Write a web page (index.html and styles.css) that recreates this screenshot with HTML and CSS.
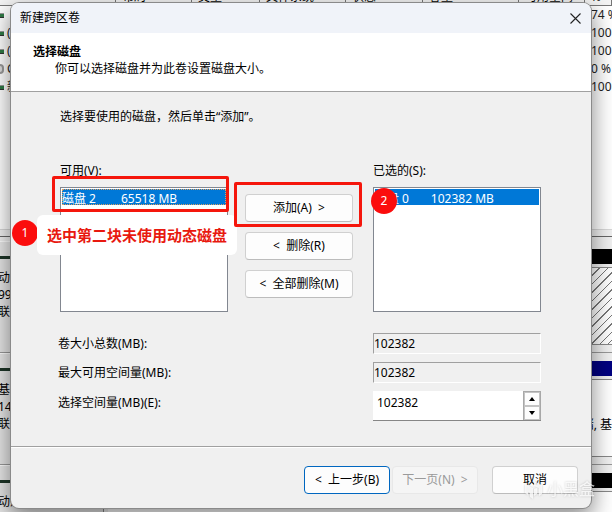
FILE: index.html
```
<!DOCTYPE html>
<html lang="zh-CN">
<head>
    <meta charset="UTF-8">
    <meta name="viewport" content="width=device-width, initial-scale=1.0">
    <title>新建跨区卷</title>
    <link rel="stylesheet" href="styles.css">
</head>
<body>
    <div class="desktop">
        <!-- Disk management window behind the dialog -->
        <div class="manager">
            <div class="columns">
                <span class="col col-name"></span>
                <span class="col col-layout">布局</span>
                <span class="col col-type">类型</span>
                <span class="col col-fs">文件系统</span>
                <span class="col col-status">状态</span>
                <span class="col col-size">容量</span>
                <span class="col col-free">可用空间</span>
                <span class="col col-percent">%</span>
            </div>
            <div class="volumes">
                <div class="volume"><i class="drive"></i><span class="name"></span><span class="percent">74 %</span></div>
                <div class="volume"><i class="drive"></i><span class="name">(</span><span class="percent">100 %</span></div>
                <div class="volume"><i class="drive"></i><span class="name">(</span><span class="percent">100 %</span></div>
                <div class="volume"><i class="drive disc"></i><span class="name">C</span><span class="percent">0 %</span></div>
                <div class="volume"><i class="drive"></i><span class="name">新</span><span class="percent">100 %</span></div>
            </div>
            <div class="disk">
                <div class="disk-label"><p>动态</p><p>99</p><p>联机</p></div>
                <div class="disk-map"><div class="bar"></div><div class="space hatched"></div></div>
            </div>
            <div class="disk">
                <div class="disk-label"><p>基本</p><p>14</p><p>联机</p></div>
                <div class="disk-map"><div class="bar primary"></div><div class="space">储, 基</div></div>
            </div>
            <div class="disk">
                <div class="disk-label"><p>动态</p></div>
                <div class="disk-map"><div class="bar"></div><div class="space"></div></div>
            </div>
        </div>

        <!-- Wizard dialog -->
        <form class="dialog">
            <div class="titlebar">
                <span>新建跨区卷</span>
                <button type="button" class="close" aria-label="关闭">
                    <svg width="11" height="11" viewBox="0 0 11 11"><path d="M.5 .5l10 10M10.5 .5l-10 10" stroke="#222" stroke-width="1.1" fill="none"/></svg>
                </button>
            </div>
            <div class="heading">
                <h1>选择磁盘</h1>
                <p>你可以选择磁盘并为此卷设置磁盘大小。</p>
            </div>

            <div class="content">
                <p class="intro">选择要使用的磁盘，然后单击“添加”。</p>

                <div class="picker">
                    <div class="list">
                        <label for="available">可用(V):</label>
                        <select id="available" class="dotted" size="7">
                            <option selected>磁盘 2&nbsp;&nbsp;&nbsp;&nbsp;&nbsp;&nbsp;&nbsp;&nbsp;65518 MB</option>
                        </select>
                        <div class="mark mark-list"></div>
                        <div class="badge badge-one">1</div>
                        <div class="tip">选中第二块未使用动态磁盘</div>
                    </div>
                    <div class="actions">
                        <button type="button">添加(A) &nbsp;&gt;</button>
                        <button type="button">&lt; &nbsp;删除(R)</button>
                        <button type="button">&lt; &nbsp;全部删除(M)</button>
                        <div class="mark mark-add"></div>
                    </div>
                    <div class="list">
                        <label for="selected">已选的(S):</label>
                        <select id="selected" size="7">
                            <option selected>磁盘 0&nbsp;&nbsp;&nbsp;&nbsp;&nbsp;&nbsp;&nbsp;102382 MB</option>
                        </select>
                        <div class="badge badge-two">2</div>
                    </div>
                </div>

                <div class="fields">
                    <div class="field">
                        <label for="total">卷大小总数(MB):</label>
                        <input type="text" id="total" class="sunken" value="102382" readonly>
                    </div>
                    <div class="field">
                        <label for="max">最大可用空间量(MB):</label>
                        <input type="text" id="max" class="sunken" value="102382" readonly>
                    </div>
                    <div class="field">
                        <label for="amount">选择空间量(MB)(E):</label>
                        <div class="spinner">
                            <input type="text" id="amount" value="102382">
                            <div class="arrows">
                                <button type="button" aria-label="增加"><svg width="6" height="4" viewBox="0 0 6 4"><path d="M3 0l3 4H0z"/></svg></button>
                                <button type="button" aria-label="减少"><svg width="6" height="4" viewBox="0 0 6 4"><path d="M0 0h6L3 4z"/></svg></button>
                            </div>
                        </div>
                    </div>
                </div>
            </div>

            <div class="footer">
                <button type="button" class="default">&lt; &nbsp;上一步(B)</button>
                <button type="button" disabled>下一页(N) &nbsp;&gt;</button>
                <button type="button" class="cancel">取消</button>
            </div>
        </form>

        <!-- Watermark -->
        <div class="watermark">
            <svg width="19" height="19" viewBox="0 0 19 19" fill="currentColor"><path d="M1 4l8 4v11l-3-2v-4l-2-1v3l-3-2zM10 1l8 4v9l-3 2V8l-5-2zM10 9l3-1v6l-3 2z"/></svg>
            <span>小黑盒</span>
        </div>
    </div>
</body>
</html>
```
FILE: styles.css
```
* {
    box-sizing: border-box;
}

body {
    margin: 0;
    font-family: "Noto Sans", "Noto Sans CJK SC", sans-serif;
    font-size: 12px;
    line-height: 16px;
    color: #000;
}

h1,
p {
    margin: 0;
    font-size: 12px;
}

button,
input,
select {
    font: inherit;
    color: inherit;
}

.desktop {
    position: relative;
    height: 100vh;
    min-height: 512px;
    overflow: hidden;
    background: #f0f0f0;
}

/* Disk management window */
.manager {
    height: 100%;
    display: flex;
    flex-direction: column;
}

.columns {
    display: flex;
    flex: none;
    align-items: flex-end;
    height: 6px;
    overflow: hidden;
    border-bottom: 1px solid #777;
    background: #f4f4f4;
}

.col {
    height: 16px;
    padding-left: 6px;
    border-right: 1px solid #777;
    white-space: nowrap;
}

.col-name { width: 116px; }
.col-layout { width: 76px; }
.col-type { width: 68px; }
.col-fs { width: 86px; }
.col-status { width: 77px; }
.col-size { width: 96px; }
.col-free { width: 66px; }
.col-percent { flex: 1; }

.volumes {
    flex: none;
    height: 231px;
    background: #fff linear-gradient(#fff 223px, #d8d8d8 223px 224px, #f0f0f0 224px);
    border-bottom: 1px solid #666;
}

.volume {
    display: flex;
    align-items: center;
    height: 18px;
    color: #222;
}

.drive {
    width: 4px;
    height: 5px;
    margin-right: 3px;
    background: #2f7a45;
    border-top: 1px solid #999;
    border-bottom: 1px solid #333;
}

.disc {
    height: 10px;
    border: 2px solid #999;
    border-left: 0;
    border-radius: 0 5px 5px 0;
    background: #ddd;
}

.volume .name {
    flex: 1;
}

.percent {
    width: 21px;
    overflow: hidden;
    white-space: nowrap;
}

.disk {
    display: flex;
    flex: none;
    height: 112px;
    border-bottom: 1px solid #999;
}

.volumes + .disk {
    margin-top: 4px;
}

.disk-label {
    width: 104px;
    padding-top: 27px;
    border-right: 1px solid #888;
    border-top: 1px solid #fff;
    background: linear-gradient(#e8e8e8 0 14px, #1d3527 14px 17px, #e6e6e6 17px);
}

.disk-label p {
    margin-left: -2px;
    line-height: 17px;
}

.disk-map {
    flex: 1;
    display: flex;
    flex-direction: column;
    margin-left: 4px;
    padding: 8px 0 7px;
}

.bar {
    height: 15px;
    background: #000;
}

.bar.primary {
    background: #000080;
}

.space {
    flex: 1;
    margin-top: 3px;
    padding-top: 37px;
    border-top: 1px solid #888;
    border-bottom: 1px solid #888;
    background: #fff;
    text-align: right;
}

.hatched {
    background: repeating-linear-gradient(135deg, #fff 0 5px, #777 5px 6px);
}

/* Dialog */
.dialog {
    position: absolute;
    inset: 3px 21px 4px 11px;
    display: flex;
    flex-direction: column;
    background: #f0f0f0;
    border-radius: 8px;
    box-shadow: 0 0 0 1px #8a8a8a, 0 8px 22px 2px rgba(0, 0, 0, 0.45);
}

.titlebar {
    display: flex;
    justify-content: space-between;
    align-items: center;
    height: 30px;
    padding: 0 10px 0 9px;
    background: #f0f3f9;
    border-radius: 8px 8px 0 0;
}

.close {
    display: flex;
    padding: 0;
    border: 0;
    background: none;
}

.heading {
    padding: 10px 22px 14px;
    background: #fff;
    border-bottom: 1px solid #a0a0a0;
}

.heading h1,
.heading p {
    line-height: 17px;
}

.heading p {
    padding-left: 22px;
}

.content {
    flex: 1;
    padding: 17px 50px 0 49px;
}

.intro {
    margin-bottom: 38px;
}

.picker {
    display: flex;
}

.list {
    position: relative;
    flex: 1;
}

.list label {
    display: block;
    margin-bottom: 8px;
}

.list select {
    display: block;
    width: 100%;
    height: 125px;
    padding: 1px;
    border: 1px solid #828790;
    border-radius: 0;
    background: #fff;
    outline: 0;
    overflow: hidden;
}

.list option {
    height: 16px;
    min-height: 16px;
    padding: 0;
    line-height: 15px;
}

.list option:checked {
    background: #0078d7 linear-gradient(#0078d7, #0078d7);
    color: #fff;
}

.dotted option:checked {
    outline: 1px dotted #e0a060;
    outline-offset: -1px;
}

.actions {
    position: relative;
    display: flex;
    flex-direction: column;
    gap: 10px;
    width: 108px;
    margin: 31px 20px 0 17px;
}

.actions button,
.footer button {
    height: 28px;
    padding: 0;
    border: 1px solid #d0d0d0;
    border-bottom-color: #bcbcbc;
    border-radius: 4px;
    background: #fdfdfd;
    white-space: nowrap;
}

.fields {
    display: flex;
    flex-direction: column;
    gap: 8px;
    margin: 21px 0 0 -2px;
}

.field {
    display: flex;
    justify-content: space-between;
    align-items: baseline;
}

.sunken,
.spinner {
    width: 168px;
}

.sunken {
    height: 21px;
    padding: 0 0 1px;
    border: 1px solid #fff;
    border-top-color: #a0a0a0;
    border-left-color: #a0a0a0;
    background: #f0f0f0;
}

.spinner {
    display: flex;
    height: 30px;
    border-bottom: 1px solid #868686;
    background: #fff;
}

.spinner input {
    flex: 1;
    min-width: 0;
    padding: 0 4px 6px;
    border: 0;
    background: none;
}

.arrows {
    display: flex;
    flex-direction: column;
    width: 18px;
    border: 1px solid #a8a8a8;
    border-bottom: 0;
    background: #f0f0f0;
}

.arrows button {
    flex: 1;
    display: flex;
    align-items: center;
    justify-content: center;
    padding: 0;
    border: 1px solid #c4c4c4;
    background: #fdfdfd;
}

.footer {
    display: flex;
    justify-content: flex-end;
    gap: 2px;
    padding: 19px 13px 14px;
    border-top: 1px solid #a0a0a0;
    box-shadow: inset 0 1px #fff;
}

.footer button {
    width: 86px;
}

.footer .default {
    border-color: #0067c0;
}

.footer button:disabled {
    border-color: #e8e8e8;
    background: #f5f5f5;
    color: #9a9a9a;
}

.footer .cancel {
    margin-left: 12px;
}

/* Red step marks */
.mark {
    position: absolute;
    border: 3px solid #f5160c;
    border-radius: 2px;
    pointer-events: none;
}

.mark-list {
    inset: 13px -1px auto -8px;
    height: 36px;
}

.mark-add {
    inset: -12px -9px auto -11px;
    height: 45px;
}

.badge {
    position: absolute;
    width: 26px;
    height: 26px;
    border-radius: 50%;
    background: #fb0d0d;
    color: #fff;
    line-height: 26px;
    text-align: center;
}

.badge-one {
    top: 57px;
    left: -48px;
}

.badge-two {
    top: 25px;
    left: -2px;
}

.tip {
    position: absolute;
    top: 52px;
    left: -23px;
    padding: 0 10px;
    border-radius: 6px;
    background: #fff;
    color: #e8190f;
    font-size: 15px;
    font-weight: bold;
    line-height: 40px;
    white-space: nowrap;
}

.watermark {
    position: absolute;
    right: 17px;
    bottom: 13px;
    display: flex;
    align-items: center;
    gap: 4px;
    color: rgba(255, 255, 255, 0.75);
    font-size: 16px;
    line-height: 20px;
    filter: drop-shadow(0 0 1px rgba(0, 0, 0, 0.25));
    pointer-events: none;
}
```
